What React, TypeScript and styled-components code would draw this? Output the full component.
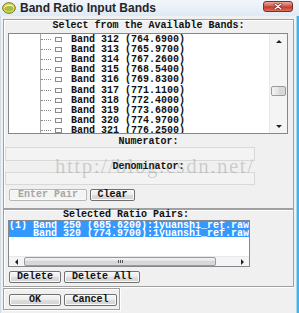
import React from 'react';
import styled, { createGlobalStyle } from 'styled-components';

const GlobalStyle = createGlobalStyle`
  html, body {
    margin: 0;
    padding: 0;
    background: #f0f0f0;
  }
  body {
    font-family: "Liberation Mono", monospace;
  }
`;

const Window = styled.div`
  position: relative;
  width: 299px;
  height: 313px;
  overflow: hidden;
  background: #f0f0f0;
  display: flex;
  flex-direction: column;
`;

const TitleBar = styled.div`
  height: 16px;
  flex: none;
  display: flex;
  align-items: center;
  padding: 0 6px 0 2px;
  background: linear-gradient(#f2f6fb, #dfe9f5);
  font: bold 12px "Liberation Sans", Arial, sans-serif;
  color: #262626;
`;

const TitleText = styled.span`
  flex: 1;
  margin-left: 4px;
  white-space: nowrap;
`;

const CloseButton = styled.div`
  align-self: flex-start;
  margin-top: 1px;
  width: 30px;
  height: 11px;
  box-sizing: border-box;
  border: 1px solid #7a2f27;
  border-radius: 3px;
  background: linear-gradient(#e9a99f, #d35d4f 45%, #c43a2d 55%, #dc7257);
  display: flex;
  align-items: center;
  justify-content: center;
`;

const Body = styled.div`
  flex: 1;
  min-height: 0;
  display: flex;
`;

const Content = styled.div`
  flex: 1;
  padding: 3px 0 0 3px;
  display: flex;
  flex-direction: column;
  align-items: flex-start;
  box-shadow: inset 1px 0 0 #d3dbe4;
`;

const FrameEdge = styled.div`
  width: 5px;
  flex: none;
  background: linear-gradient(to right, #f0f0f0 0 2px, #9fd9f4 2px 3px, #38b4ee 3px);
`;

const Group = styled.div<{ $width: number; $gap?: number }>`
  width: ${p => p.$width}px;
  margin-top: ${p => p.$gap ?? 0}px;
  box-sizing: border-box;
  border: 1px solid #a0a0a0;
  box-shadow: inset 1px 1px 0 #fff, 1px 1px 0 #fff;
  display: flex;
  flex-direction: column;
  align-items: flex-start;
`;

const Caption = styled.div<{ $height: number; $top?: number; $width?: number }>`
  align-self: ${p => (p.$width ? 'flex-start' : 'stretch')};
  width: ${p => (p.$width ? `${p.$width}px` : 'auto')};
  margin-top: ${p => p.$top ?? 0}px;
  height: ${p => p.$height}px;
  text-align: center;
  font: bold 10px "Liberation Mono", monospace;
  line-height: ${p => p.$height}px;
  color: #111;
  white-space: pre;
`;

const ListBox = styled.div<{ $width: number; $height: number; $top: number }>`
  margin: ${p => p.$top}px 0 0 4px;
  width: ${p => p.$width}px;
  height: ${p => p.$height}px;
  box-sizing: border-box;
  border: 1px solid #828790;
  background: #fff;
  display: flex;
  overflow: hidden;
`;

const TreeArea = styled.div`
  flex: 1;
  min-width: 0;
  overflow: hidden;
  padding-left: 31px;
`;

const TreeGuide = styled.div`
  height: 100%;
  border-left: 1px solid #a8a8a8;
`;

const TreeRow = styled.div`
  height: 10.2px;
  display: flex;
  align-items: center;
`;

const BranchDots = styled.span`
  width: 10px;
  height: 0;
  border-top: 1px dotted #8a8a8a;
`;

const LeafBox = styled.span`
  margin-left: 4px;
  width: 7px;
  height: 5px;
  box-sizing: border-box;
  border: 1px solid #8a8a8a;
  background: #fafafa;
`;

const ItemText = styled.span`
  margin-left: 9px;
  font: bold 10px "Liberation Mono", monospace;
  color: #111;
  white-space: pre;
`;

const VScroll = styled.div`
  width: 17px;
  flex: none;
  display: flex;
  flex-direction: column;
  background: #f4f4f4;
  border-left: 1px solid #e8e8e8;
`;

const ArrowButton = styled.div<{ $size: number; $horizontal?: boolean }>`
  flex: none;
  ${p => (p.$horizontal ? `width: ${p.$size}px;` : `height: ${p.$size}px;`)}
  display: flex;
  align-items: center;
  justify-content: center;
`;

const Arrow = styled.span<{ $dir: 'up' | 'down' | 'left' | 'right' }>`
  width: 0;
  height: 0;
  ${p =>
    p.$dir === 'up'
      ? 'border-left: 3px solid transparent; border-right: 3px solid transparent; border-bottom: 3px solid #222;'
      : p.$dir === 'down'
      ? 'border-left: 3px solid transparent; border-right: 3px solid transparent; border-top: 3px solid #222;'
      : p.$dir === 'left'
      ? 'border-top: 3px solid transparent; border-bottom: 3px solid transparent; border-right: 3px solid #222;'
      : 'border-top: 3px solid transparent; border-bottom: 3px solid transparent; border-left: 3px solid #222;'}
`;

const Track = styled.div<{ $horizontal?: boolean }>`
  flex: 1;
  display: flex;
  flex-direction: ${p => (p.$horizontal ? 'row' : 'column')};
`;

const Thumb = styled.div<{ $horizontal?: boolean; $offset: number; $length: number }>`
  box-sizing: border-box;
  border: 1px solid #9a9a9a;
  border-radius: 2px;
  display: flex;
  align-items: center;
  justify-content: center;
  gap: 1px;
  ${p =>
    p.$horizontal
      ? `margin-left: ${p.$offset}px; width: ${p.$length}px; height: 100%;
         background: linear-gradient(#f3f3f3, #e2e2e2 50%, #d6d6d6 50%, #dadada);`
      : `margin: ${p.$offset}px 1px 0 1px; height: ${p.$length}px;
         background: linear-gradient(to right, #f3f3f3, #e2e2e2 50%, #d6d6d6 50%, #dadada);`}
`;

const Grip = styled.span`
  width: 1px;
  height: 3px;
  background: #555;
`;

const PairArea = styled.div`
  flex: 1;
  min-height: 0;
  display: flex;
  flex-direction: column;
`;

const PairItems = styled.div`
  flex: 1;
  overflow: hidden;
`;

const PairItem = styled.div<{ $selected?: boolean }>`
  height: 16px;
  box-sizing: border-box;
  padding-top: 0.5px;
  background: ${p => (p.$selected ? '#3399ff' : 'transparent')};
  color: ${p => (p.$selected ? '#fff' : '#111')};
  font: bold 10px "Liberation Mono", monospace;
  line-height: 8px;
  white-space: pre;
`;

const HScroll = styled.div`
  height: 9px;
  flex: none;
  display: flex;
  background: #f4f4f4;
  border-top: 1px solid #e8e8e8;
`;

const Field = styled.div<{ $height: number }>`
  margin-left: 1px;
  width: 250px;
  height: ${p => p.$height}px;
  box-sizing: border-box;
  border: 1px solid #d9d9d9;
  background: #f3f3f3;
`;

const ButtonRow = styled.div<{ $top: number; $bottom: number }>`
  display: flex;
  gap: 3px;
  margin: ${p => p.$top}px 0 ${p => p.$bottom}px 5px;
`;

const Button = styled.button<{ $width: number }>`
  width: ${p => p.$width}px;
  height: 12px;
  padding: 0;
  box-sizing: border-box;
  border: 1px solid #707070;
  border-radius: 2px;
  background: linear-gradient(#f7f7f7, #ebebeb 50%, #dddddd 50%, #d3d3d3);
  box-shadow: inset 0 0 0 1px #fbfbfb;
  font: bold 10px/10px "Liberation Mono", monospace;
  color: #111;
  display: flex;
  align-items: center;
  justify-content: center;
  &:disabled {
    color: #a6a6a6;
    border-color: #b7b7b7;
    background: #f4f4f4;
  }
`;

const Watermark = styled.div`
  position: absolute;
  left: 55px;
  top: 156px;
  font: 21px/21px "Liberation Serif", serif;
  letter-spacing: 1.5px;
  color: rgba(110, 110, 110, 0.28);
  pointer-events: none;
  white-space: nowrap;
`;

const bands = [
  ['312', '764.6900'],
  ['313', '765.9700'],
  ['314', '767.2600'],
  ['315', '768.5400'],
  ['316', '769.8300'],
  ['317', '771.1100'],
  ['318', '772.4000'],
  ['319', '773.6800'],
  ['320', '774.9700'],
  ['321', '776.2500'],
];

const AppIcon = () => (
  <svg width="14" height="12" viewBox="0 0 14 12">
    <ellipse cx="7" cy="6" rx="6.3" ry="5.3" fill="#f3cf3a" stroke="#5f7a2a" strokeWidth="1" />
    <ellipse cx="7" cy="6.5" rx="4.2" ry="2.8" fill="#9bc24a" />
    <path d="M2.5 5.5 C5 2.5 9.5 2.5 11.5 5" stroke="#fff" strokeWidth="1" fill="none" />
  </svg>
);

const CloseGlyph = () => (
  <svg width="10" height="7" viewBox="0 0 10 7">
    <path d="M2 1 L8 6 M8 1 L2 6" stroke="#6a1e16" strokeWidth="2.6" strokeLinecap="round" />
    <path d="M2 1 L8 6 M8 1 L2 6" stroke="#fff" strokeWidth="1.4" strokeLinecap="round" />
  </svg>
);

export default function App() {
  return (
    <>
      <GlobalStyle />
      <Window>
        <TitleBar>
          <AppIcon />
          <TitleText>Band Ratio Input Bands</TitleText>
          <CloseButton>
            <CloseGlyph />
          </CloseButton>
        </TitleBar>
        <Body>
          <Content>
            <Group $width={291}>
              <Caption $height={11}>Select from the Available Bands:</Caption>
              <ListBox $width={280} $height={101} $top={2}>
                <TreeArea>
                  <TreeGuide>
                    {bands.map(([n, wl]) => (
                      <TreeRow key={n}>
                        <BranchDots />
                        <LeafBox />
                        <ItemText>{`Band ${n} (${wl})`}</ItemText>
                      </TreeRow>
                    ))}
                  </TreeGuide>
                </TreeArea>
                <VScroll>
                  <ArrowButton $size={14}>
                    <Arrow $dir="up" />
                  </ArrowButton>
                  <Track>
                    <Thumb $offset={38} $length={10} />
                  </Track>
                  <ArrowButton $size={14}>
                    <Arrow $dir="down" />
                  </ArrowButton>
                </VScroll>
              </ListBox>
              <Caption $height={10} $top={3}>Numerator:</Caption>
              <Field $height={14} />
              <Caption $height={10} $top={1}>Denominator:</Caption>
              <Field $height={13} />
              <ButtonRow $top={4} $bottom={7}>
                <Button $width={78} disabled>Enter Pair</Button>
                <Button $width={45}>Clear</Button>
              </ButtonRow>
            </Group>

            <Group $width={291}>
              <Caption $height={10} $width={244}>Selected Ratio Pairs:</Caption>
              <ListBox $width={242} $height={47} $top={0}>
                <PairArea>
                  <PairItems>
                    <PairItem $selected>
                      {'(1) Band 250 (685.6200):1yuanshi_ref.raw\n    Band 320 (774.9700):1yuanshi_ref.raw'}
                    </PairItem>
                  </PairItems>
                  <HScroll>
                    <ArrowButton $size={14} $horizontal>
                      <Arrow $dir="left" />
                    </ArrowButton>
                    <Track $horizontal>
                      <Thumb $horizontal $offset={1} $length={192}>
                        <Grip />
                        <Grip />
                        <Grip />
                      </Thumb>
                    </Track>
                    <ArrowButton $size={14} $horizontal>
                      <Arrow $dir="right" />
                    </ArrowButton>
                  </HScroll>
                </PairArea>
              </ListBox>
              <ButtonRow $top={4} $bottom={3}>
                <Button $width={52}>Delete</Button>
                <Button $width={76}>Delete All</Button>
              </ButtonRow>
            </Group>

            <Group $width={117} $gap={1}>
              <ButtonRow $top={5} $bottom={3}>
                <Button $width={52}>OK</Button>
                <Button $width={53}>Cancel</Button>
              </ButtonRow>
            </Group>
          </Content>
          <FrameEdge />
        </Body>
        <Watermark>http://blog.csdn.net/</Watermark>
      </Window>
    </>
  );
}
